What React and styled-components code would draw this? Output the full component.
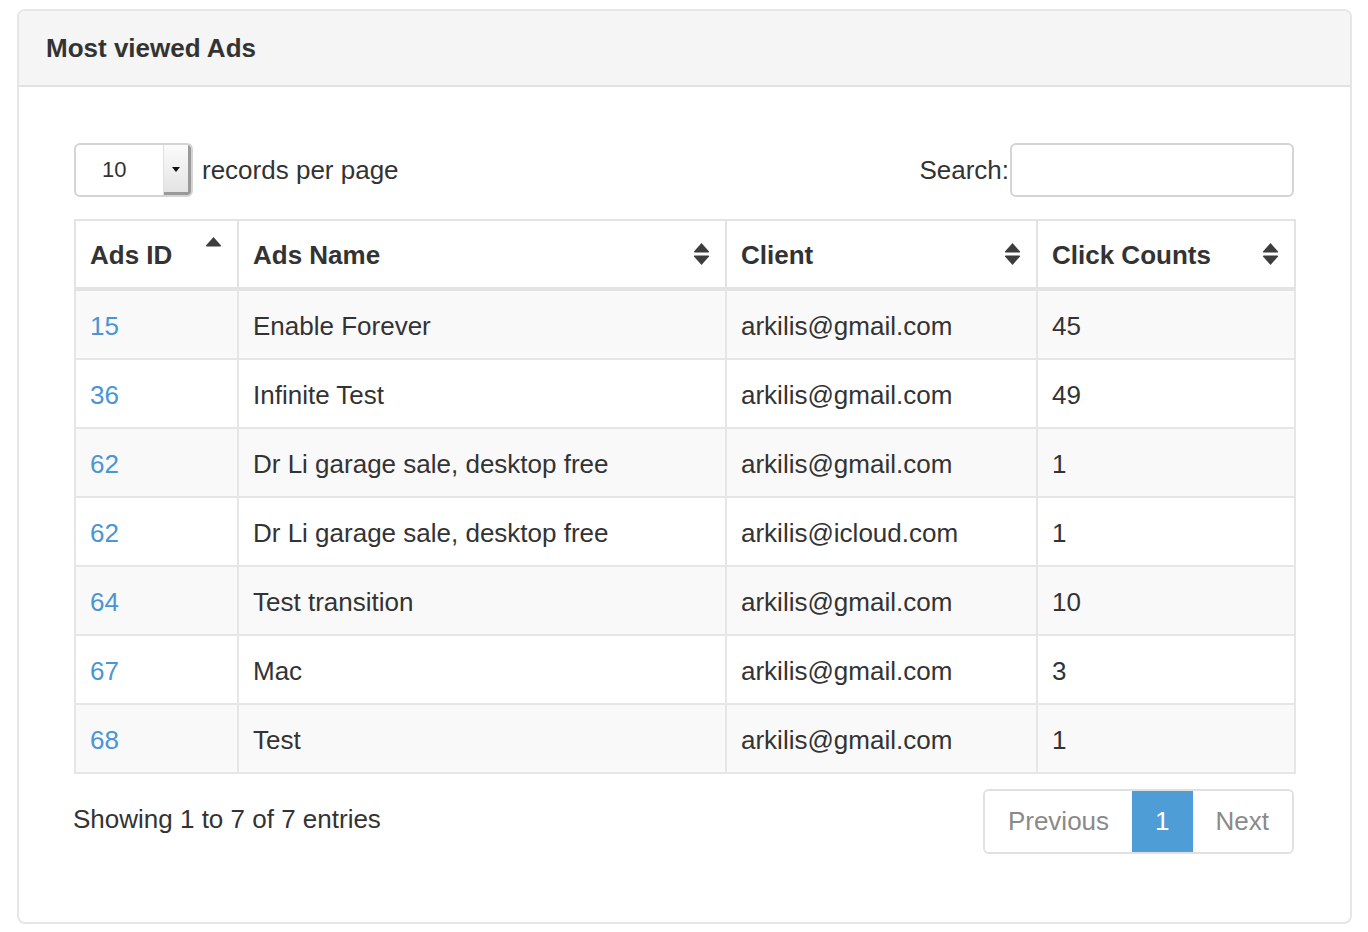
import React from "react";
import styled, { createGlobalStyle } from "styled-components";

const Global = createGlobalStyle`
  html, body { margin: 0; padding: 0; background: #fff; }
  body { font-family: "Liberation Sans", Arial, sans-serif; color: #333; }
`;

const Page = styled.div`
  padding: 9px 16px 10px 17px;
`;

const Panel = styled.section`
  border: 2px solid #e6e6e6;
  border-radius: 8px;
  background: #fff;
  overflow: hidden;
`;

const PanelHeader = styled.header`
  height: 74px;
  display: flex;
  align-items: center;
  padding: 0 27px;
  background: #f5f5f5;
  border-bottom: 2px solid #e2e2e2;
`;

const Title = styled.h3`
  margin: 0;
  font-size: 26px;
  font-weight: 700;
  color: #333;
`;

const PanelBody = styled.div`
  padding: 56px 54px 68px 55px;
`;

const Controls = styled.div`
  display: flex;
  align-items: center;
  justify-content: space-between;
  margin-bottom: 22px;
`;

const LengthGroup = styled.label`
  display: flex;
  align-items: center;
  gap: 9px;
  font-size: 26px;
`;

const SelectBox = styled.div`
  width: 119px;
  height: 54px;
  box-sizing: border-box;
  border: 2px solid #d4d4d4;
  border-radius: 6px;
  display: flex;
  overflow: hidden;
  background: #fff;
`;

const SelectValue = styled.span`
  flex: 1;
  display: flex;
  align-items: center;
  padding-left: 26px;
  font-size: 22px;
  color: #333;
`;

const SelectArrow = styled.span`
  width: 28px;
  display: flex;
  align-items: center;
  justify-content: center;
  background: linear-gradient(#fbfbfb, #e2e2e2);
  border-left: 1px solid #e0e0e0;
  box-shadow: inset -3px -3px 0 #9a9a9a;
  padding-right: 3px;
  padding-bottom: 2px;
  box-sizing: border-box;
`;

const SearchGroup = styled.label`
  display: flex;
  align-items: center;
  font-size: 26px;
  margin-right: 2px;
`;

const SearchInput = styled.input`
  width: 284px;
  height: 54px;
  box-sizing: border-box;
  border: 2px solid #d4d4d4;
  border-radius: 6px;
  margin-left: 1px;
  outline: none;
  font-size: 26px;
`;

const Table = styled.table`
  width: 100%;
  table-layout: fixed;
  border-collapse: collapse;
  border: 2px solid #e3e3e3;
  font-size: 26px;
`;

const Th = styled.th`
  position: relative;
  text-align: left;
  font-weight: 700;
  padding: 16px 14px 13px;
  line-height: 37px;
  border: 2px solid #e3e3e3;
  border-bottom: 4px solid #e3e3e3;
  color: #333;
`;

const SortIcon = styled.svg`
  position: absolute;
  right: 15px;
  top: 50%;
  transform: translateY(-50%);
`;

const Tr = styled.tr`
  background: ${(p) => (p.$striped ? "#f9f9f9" : "#fff")};
`;

const Td = styled.td`
  padding: 17px 14px 13px;
  line-height: 37px;
  border: 2px solid #e6e6e6;
  color: #333;
  white-space: nowrap;
`;

const IdLink = styled.a`
  color: #4a95d4;
  text-decoration: none;
`;

const Footer = styled.div`
  display: flex;
  justify-content: space-between;
  align-items: flex-start;
  margin-top: 15px;
`;

const Info = styled.div`
  font-size: 26px;
  line-height: 37px;
  padding-top: 12px;
  margin-left: -1px;
`;

const Pager = styled.ul`
  display: flex;
  list-style: none;
  margin: 0 2px 0 0;
  padding: 0;
  border: 2px solid #e0e0e0;
  border-radius: 6px;
  overflow: hidden;
`;

const PageItem = styled.li`
  padding: 0 23px;
  line-height: 37px;
  font-size: 26px;
  color: ${(p) => (p.$active ? "#fff" : "#8a8a8a")};
  background: ${(p) => (p.$active ? "#4f9dd6" : "#fff")};
  margin: ${(p) => (p.$active ? "-2px 0" : "0")};
  padding-top: ${(p) => (p.$active ? "14px" : "12px")};
  padding-bottom: ${(p) => (p.$active ? "14px" : "12px")};
`;

const SortBoth = () => (
  <SortIcon width="17" height="24" viewBox="0 0 17 24">
    <path d="M8.5 1 L16 9.5 Q16.5 10.5 15 10.5 L2 10.5 Q0.5 10.5 1 9.5 Z" fill="#3d3d3d" />
    <path d="M2 13.5 L15 13.5 Q16.5 13.5 16 14.5 L8.5 23 L1 14.5 Q0.5 13.5 2 13.5 Z" fill="#3d3d3d" />
  </SortIcon>
);

const SortAsc = () => (
  <SortIcon width="17" height="24" viewBox="0 0 17 24" style={{ marginTop: "-6px" }}>
    <path d="M8.5 1 L16 9.5 Q16.5 10.5 15 10.5 L2 10.5 Q0.5 10.5 1 9.5 Z" fill="#3d3d3d" />
  </SortIcon>
);

const rows = [
  ["15", "Enable Forever", "arkilis@gmail.com", "45"],
  ["36", "Infinite Test", "arkilis@gmail.com", "49"],
  ["62", "Dr Li garage sale, desktop free", "arkilis@gmail.com", "1"],
  ["62", "Dr Li garage sale, desktop free", "arkilis@icloud.com", "1"],
  ["64", "Test transition", "arkilis@gmail.com", "10"],
  ["67", "Mac", "arkilis@gmail.com", "3"],
  ["68", "Test", "arkilis@gmail.com", "1"],
];

export default function App() {
  return (
    <Page>
      <Global />
      <Panel>
        <PanelHeader>
          <Title>Most viewed Ads</Title>
        </PanelHeader>
        <PanelBody>
          <Controls>
            <LengthGroup>
              <SelectBox>
                <SelectValue>10</SelectValue>
                <SelectArrow>
                  <svg width="8" height="5" viewBox="0 0 8 5">
                    <path d="M0 0 L8 0 L4 5 Z" fill="#111" />
                  </svg>
                </SelectArrow>
              </SelectBox>
              records per page
            </LengthGroup>
            <SearchGroup>
              Search:
              <SearchInput type="text" />
            </SearchGroup>
          </Controls>
          <Table>
            <colgroup>
              <col style={{ width: "163px" }} />
              <col style={{ width: "488px" }} />
              <col style={{ width: "311px" }} />
              <col />
            </colgroup>
            <thead>
              <tr>
                <Th>Ads ID<SortAsc /></Th>
                <Th>Ads Name<SortBoth /></Th>
                <Th>Client<SortBoth /></Th>
                <Th>Click Counts<SortBoth /></Th>
              </tr>
            </thead>
            <tbody>
              {rows.map((r, i) => (
                <Tr key={i} $striped={i % 2 === 0}>
                  <Td><IdLink href="#">{r[0]}</IdLink></Td>
                  <Td>{r[1]}</Td>
                  <Td>{r[2]}</Td>
                  <Td>{r[3]}</Td>
                </Tr>
              ))}
            </tbody>
          </Table>
          <Footer>
            <Info>Showing 1 to 7 of 7 entries</Info>
            <Pager>
              <PageItem>Previous</PageItem>
              <PageItem $active>1</PageItem>
              <PageItem>Next</PageItem>
            </Pager>
          </Footer>
        </PanelBody>
      </Panel>
    </Page>
  );
}
